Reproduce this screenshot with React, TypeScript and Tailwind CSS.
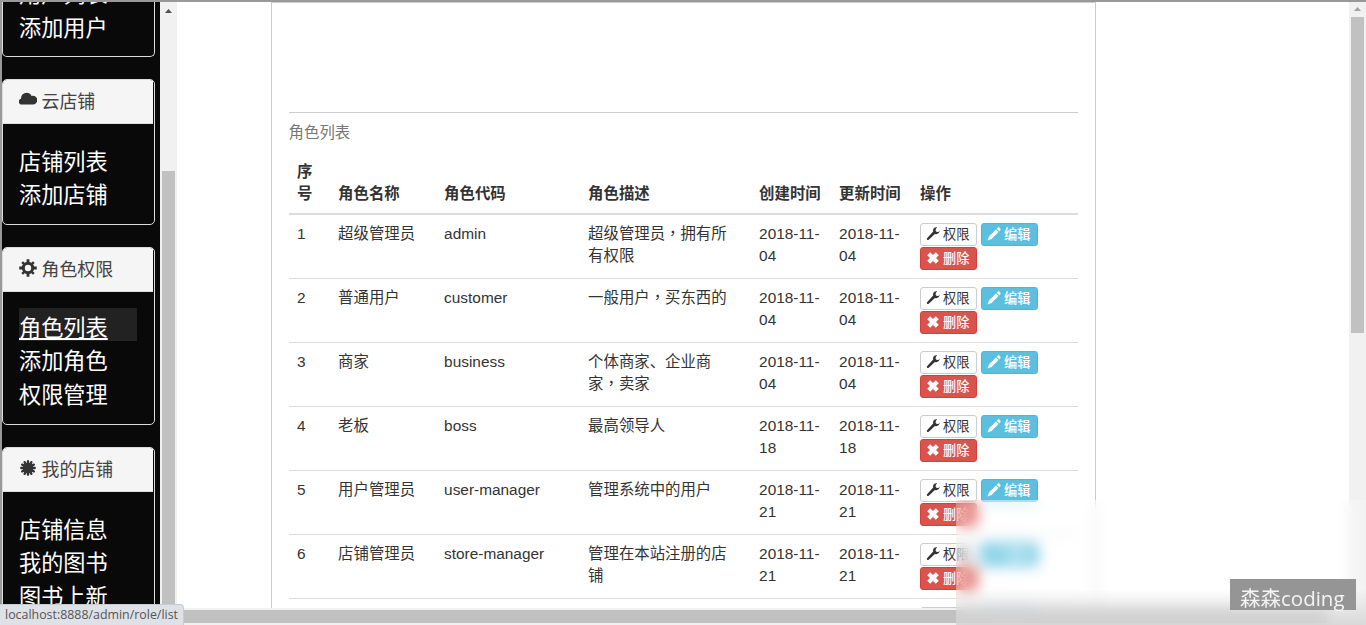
import React from "react";

const font = "font-['Liberation_Sans','Noto_Sans_CJK_SC',sans-serif]";

function Cloud() {
  return (
    <svg viewBox="0 0 1200 1200" className="-mt-[3px] h-[18px] w-[18px] shrink-0" fill="currentColor">
      <path transform="matrix(1 0 0 -1 0 1200)" d="M503 1089q110 0 200.5 -59.5t134.5 -156.5q44 14 90 14q120 0 205 -86.5t85 -206.5q0 -121 -85 -207.5t-205 -86.5h-750q-79 0 -135.5 57t-56.5 137q0 69 42.5 122.5t108.5 67.5q-2 12 -2 37q0 153 108 260.5t260 107.5z" />
    </svg>
  );
}

function Cog() {
  return (
    <svg viewBox="0 0 18 18" className="-mt-[3px] h-[18px] w-[18px] shrink-0" fill="none" stroke="currentColor">
      <circle cx="9" cy="9" r="4.700" strokeWidth="3" />
      <path strokeWidth="2.800" d="M9 .2v3.500M9 14.300v3.500M.2 9h3.500M14.300 9h3.500" />
      <path strokeWidth="2.400" d="M3.200 3.200l2 2M12.800 12.800l2 2M14.800 3.200l-2 2M5.200 12.800l-2 2" />
    </svg>
  );
}

function Certificate() {
  return (
    <svg viewBox="0 0 18 18" className="-mt-[3px] h-[18px] w-[18px] shrink-0" fill="currentColor" stroke="currentColor">
      <circle cx="9" cy="9" r="5.300" stroke="none" />
      <path strokeWidth="2.300" strokeLinecap="round" d="M9 2.200v13.600M2.200 9h13.600M5.600 3.100l6.800 11.800M12.400 3.100L5.600 14.900M3.100 5.600l11.800 6.800M14.900 5.600L3.100 12.400" />
    </svg>
  );
}

function Wrench() {
  return (
    <svg viewBox="0 0 14 14" className="-mt-px h-[14px] w-[14px] shrink-0" fill="currentColor">
      <path d="M13.700 3.600 12.900 4.700 10.700 4.900 9.500 3.600 10 1.500 11.300.5C9.500 0 7.700.8 7.200 2.500c-.2.8-.2 1.300 0 2L1.300 11c-.6.700-.6 1.300-.1 1.800.5.5 1.200.4 1.800-.2L8.900 6.900c2.400.9 4.700-.6 4.800-3.300z" />
    </svg>
  );
}

function Pencil() {
  return (
    <svg viewBox="0 0 14 14" className="-mt-px h-[14px] w-[14px] shrink-0" fill="currentColor">
      <path d="M10.900.6c.4-.4.9-.4 1.300 0l1.200 1.200c.4.4.4.9 0 1.300l-1.200 1.100-2.500-2.500zM9 2.400 11.500 4.900 4.600 11.900.4 13.600 2 9.400z" />
    </svg>
  );
}

function Remove() {
  return (
    <svg viewBox="0 0 14 14" className="-mt-px h-[14px] w-[14px] shrink-0" fill="none" stroke="currentColor">
      <path strokeWidth="4.200" d="M2.700 2.700 11.300 11.300M11.300 2.700 2.700 11.300" />
    </svg>
  );
}

function Links({ items, active }: { items: string[]; active?: string }) {
  return (
    <ul className="ml-[16px] w-[118px] shrink-0 text-[22.2px] text-white">
      {items.map((t) => (
        <li key={t} className={t === active ? "h-[33.3px] bg-[#222] pt-[4px] leading-[33px] underline decoration-2 underline-offset-[2px]" : "h-[33.3px] pt-[4px] leading-[33px]"}>
          {t}
        </li>
      ))}
    </ul>
  );
}

function Panel({ icon, title, items, active, size, pad }: { icon: React.ReactNode; title: string; items: string[]; active?: string; size: string; pad: string }) {
  return (
    <section className={"mt-[22px] shrink-0 overflow-hidden rounded-[5px] border border-[#ddd] " + size}>
      <h2 className="mr-px flex h-[44px] items-center gap-[4.5px] border-b border-[#ddd] bg-[#f5f5f5] pl-[16px] text-[17.9px] text-[#333]">
        {icon}
        <span className="pt-px text-[#444]">{title}</span>
      </h2>
      <div className={pad}>
        <Links items={items} active={active} />
      </div>
    </section>
  );
}

const rows = [
  ["1", "超级管理员", "admin", "超级管理员，拥有所有权限", "2018-11-04"],
  ["2", "普通用户", "customer", "一般用户，买东西的", "2018-11-04"],
  ["3", "商家", "business", "个体商家、企业商家，卖家", "2018-11-04"],
  ["4", "老板", "boss", "最高领导人", "2018-11-18"],
  ["5", "用户管理员", "user-manager", "管理系统中的用户", "2018-11-21"],
  ["6", "店铺管理员", "store-manager", "管理在本站注册的店铺", "2018-11-21"],
];

const cols = "grid grid-cols-[41px_106px_144px_171px_80px_81px_1fr] [&>*]:pl-[8.5px] [&>*]:pr-[9.2px]";
const btn = "flex h-[23px] w-[57px] items-center gap-[3px] rounded-[3px] border pl-[5px] text-[13.2px] leading-[20px]";

// Full-width commas sit in the middle of their cell, as the TC face draws them.
function Text({ value }: { value: string }) {
  const parts = value.split("，");
  return (
    <>
      {parts.map((p, i) => (
        <React.Fragment key={i}>
          {i > 0 && <span lang="zh-TW" className="font-['Noto_Sans_CJK_TC',sans-serif] leading-[1px]">，</span>}
          {p}
        </React.Fragment>
      ))}
    </>
  );
}

function Row({ r, first }: { r: string[]; first: boolean }) {
  return (
    <div className={cols + (first ? " h-[63px] pt-[8px]" : " h-[64px] border-t border-[#ddd] pt-[8px]")}>
      {r.map((c, i) => (
        <div key={i}><Text value={c} /></div>
      ))}
      <div>{r[4]}</div>
      <div>
        <div className="flex w-[118px] flex-wrap gap-x-[4px] gap-y-[1px]">
          <span className={btn + " border-[#ccc] bg-white text-[#333]"}><Wrench />权限</span>
          <span className={btn + " border-[#46b8da] bg-[#5bc0de] font-medium text-white"}><Pencil />编辑</span>
          <span className={btn + " border-[#d43f3a] bg-[#d9534f] font-medium text-white"}><Remove />删除</span>
        </div>
      </div>
    </div>
  );
}

export default function App() {
  return (
    <div className={"relative flex h-[625px] w-[1366px] overflow-hidden border-t-2 border-[#999] bg-white text-[#333] " + font}>
      <aside className="flex h-full w-[160px] shrink-0 flex-col overflow-hidden border-l-2 border-[#999] bg-[#090909] pr-[5px]">
        <div className="flex h-[55px] shrink-0 flex-col justify-end overflow-hidden rounded-b-[5px] border border-t-0 border-[#ddd] pb-[15px]">
          <Links items={["用户列表", "添加用户"]} />
        </div>
        <Panel icon={<Cloud />} title="云店铺" items={["店铺列表", "添加店铺"]} size="h-[146px]" pad="pt-[18px]" />
        <Panel icon={<Cog />} title="角色权限" items={["角色列表", "添加角色", "权限管理"]} active="角色列表" size="h-[178px]" pad="pt-[16px]" />
        <Panel icon={<Certificate />} title="我的店铺" items={["店铺信息", "我的图书", "图书上新"]} size="h-[200px]" pad="pt-[18px]" />
      </aside>
      <div className="flex w-[17px] shrink-0 flex-col items-center bg-[#f1f1f1] pt-[7px]">
        <svg viewBox="0 0 7 4" className="h-[4px] w-[7px] shrink-0" fill="#505050"><path d="M3.500 0 7 4H0z" /></svg>
        <div className="mt-[158px] w-[13px] flex-1 bg-[#c1c1c1]" />
      </div>
      <div className="flex min-w-0 flex-1 flex-col">
        <main className="h-[606px] overflow-hidden pl-[94px]">
          <div className="h-[800px] w-[825px] border border-[#ccc] pl-[16.6px] pr-[17px] pt-[109px] text-[15.4px] leading-[22px]">
            <div className="border-t border-[#ccc] pt-[9px] text-[#777]">角色列表</div>
            <div className={cols + " mt-[17px] h-[54px] items-end border-b-2 border-[#ddd] pb-[8px] font-bold"}>
              <div>序号</div><div>角色名称</div><div>角色代码</div><div>角色描述</div><div>创建时间</div><div>更新时间</div><div>操作</div>
            </div>
            {rows.map((r, i) => <Row key={r[0]} r={r} first={i === 0} />)}
            <div className={cols + " border-t border-[#ddd] pt-[8px]"}>
              <div className="col-start-7"><div className="flex gap-[4px]"><span className={btn + " border-[#ccc]"} /><span className={btn + " border-[#46b8da] bg-[#5bc0de]"} /></div></div>
            </div>
          </div>
        </main>
        <div className="h-[17px] bg-[#f1f1f1] py-[2px]"><div className="h-[13px] w-[1150px] bg-[#c1c1c1]" /></div>
      </div>
      <div className="-mt-[2px] flex w-[17px] shrink-0 flex-col items-center bg-[#f1f1f1] pt-[7px]">
        <svg viewBox="0 0 7 4" className="h-[4px] w-[7px] shrink-0" fill="#a3a3a3"><path d="M3.500 0 7 4H0z" /></svg>
        <div className="mt-[6px] h-[316px] w-[13px] bg-[#c1c1c1]" />
      </div>
      <div className="absolute bottom-0 left-0 h-[21px] w-[184px] rounded-tr-[4px] border-r border-t border-[#c8cbd0] bg-[#dee1e6] pl-[5px] font-['Open_Sans','Noto_Sans',sans-serif] text-[12.4px] leading-[20px] text-[#555]">localhost:8888/admin/role/list</div>
      <div className="absolute bottom-0 right-0 h-[125px] w-[410px] bg-white/15 backdrop-blur-[7px]">
        <div className="absolute inset-x-0 bottom-0 h-[36px] bg-linear-to-b from-transparent to-[#d2d2d2]/80" />
      </div>
      <div className="absolute bottom-[15px] right-[10px] h-[31px] w-[126px] bg-[#959595] pl-[10px] font-['Open_Sans','Noto_Sans_CJK_SC',sans-serif] text-[20.5px] leading-[38px] text-[#f4f4f4]">森森coding</div>
    </div>
  );
}
